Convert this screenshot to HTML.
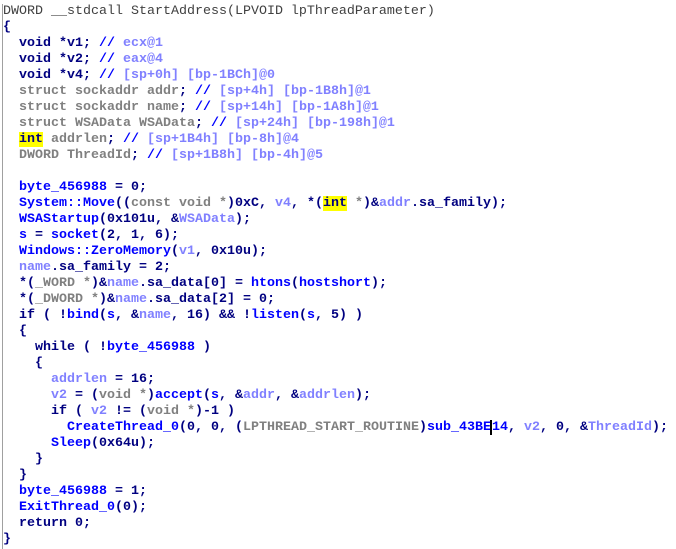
<!DOCTYPE html>
<html><head><meta charset="utf-8"><style>
html,body{margin:0;padding:0;background:#fff;width:676px;height:542px;overflow:hidden}
#c{position:absolute;left:2px;top:4px;border-left:1px solid #a0a0a0;height:545px;padding-left:0px;
font-family:"Liberation Mono",monospace;font-size:13.33px;line-height:16px;font-weight:bold;color:#000080;white-space:pre}
.k{color:#000080}.t{color:#808080}.g{color:#0000ff}.l{color:#8080ff}.h{background:#ffff00}
.hd{color:#404040;font-weight:normal}
.cur{border-left:2px solid #000;margin-left:-1px}
</style></head><body>
<div id="c"><span class="hd">DWORD __stdcall StartAddress(LPVOID lpThreadParameter)</span>
{
  void *v1; <span class="g">//</span> <span class="l">ecx@1</span>
  void *v2; <span class="g">//</span> <span class="l">eax@4</span>
  void *v4; <span class="g">//</span> <span class="l">[sp+0h] [bp-1BCh]@0</span>
  <span class="t">struct sockaddr addr</span>; <span class="g">//</span> <span class="l">[sp+4h] [bp-1B8h]@1</span>
  <span class="t">struct sockaddr name</span>; <span class="g">//</span> <span class="l">[sp+14h] [bp-1A8h]@1</span>
  <span class="t">struct WSAData WSAData</span>; <span class="g">//</span> <span class="l">[sp+24h] [bp-198h]@1</span>
  <span class="h">int</span> <span class="t">addrlen</span>; <span class="g">//</span> <span class="l">[sp+1B4h] [bp-8h]@4</span>
  <span class="t">DWORD ThreadId</span>; <span class="g">//</span> <span class="l">[sp+1B8h] [bp-4h]@5</span>

  <span class="g">byte_456988</span> = 0;
  <span class="g">System::Move</span>((<span class="t">const void *</span>)0xC, <span class="l">v4</span>, *(<span class="h">int</span> <span class="t">*</span>)&amp;<span class="l">addr</span>.sa_family);
  <span class="g">WSAStartup</span>(0x101u, &amp;<span class="l">WSAData</span>);
  <span class="g">s</span> = <span class="g">socket</span>(2, 1, 6);
  <span class="g">Windows::ZeroMemory</span>(<span class="l">v1</span>, 0x10u);
  <span class="l">name</span>.sa_family = 2;
  *(<span class="t">_WORD *</span>)&amp;<span class="l">name</span>.sa_data[0] = <span class="g">htons</span>(<span class="g">hostshort</span>);
  *(<span class="t">_DWORD *</span>)&amp;<span class="l">name</span>.sa_data[2] = 0;
  if ( !<span class="g">bind</span>(<span class="g">s</span>, &amp;<span class="l">name</span>, 16) &amp;&amp; !<span class="g">listen</span>(<span class="g">s</span>, 5) )
  {
    while ( !<span class="g">byte_456988</span> )
    {
      <span class="l">addrlen</span> = 16;
      <span class="l">v2</span> = (<span class="t">void *</span>)<span class="g">accept</span>(<span class="g">s</span>, &amp;<span class="l">addr</span>, &amp;<span class="l">addrlen</span>);
      if ( <span class="l">v2</span> != (<span class="t">void *</span>)-1 )
        <span class="g">CreateThread_0</span>(0, 0, (<span class="t">LPTHREAD_START_ROUTINE</span>)<span class="g">sub_43BE<span class="cur"></span>14</span>, <span class="l">v2</span>, 0, &amp;<span class="l">ThreadId</span>);
      <span class="g">Sleep</span>(0x64u);
    }
  }
  <span class="g">byte_456988</span> = 1;
  <span class="g">ExitThread_0</span>(0);
  return 0;
}</div>
</body></html>
